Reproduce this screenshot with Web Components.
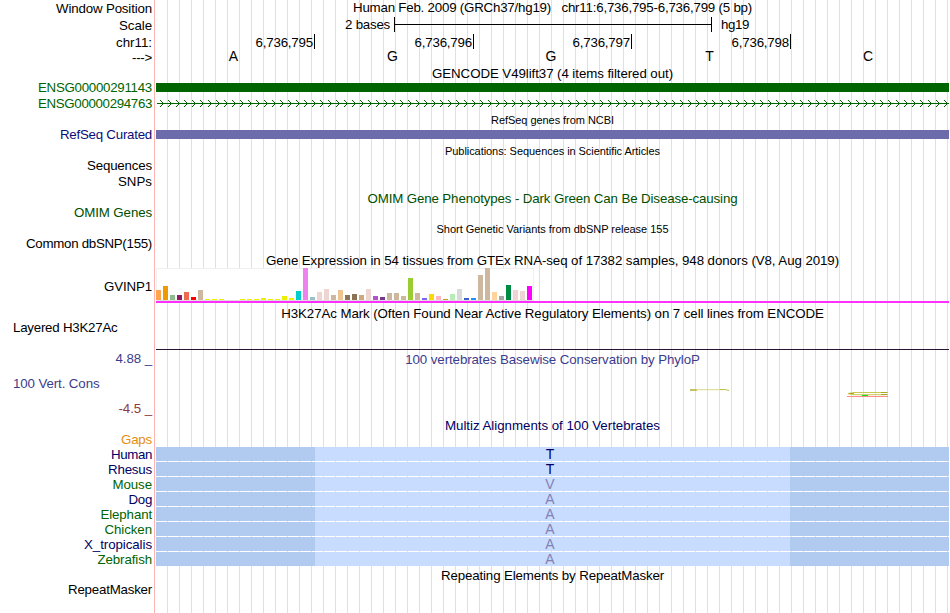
<!DOCTYPE html>
<html lang="en">
<head>
<meta charset="utf-8">
<title>Genome Browser - Human Feb. 2009 (GRCh37/hg19)</title>
<style>
  body {
    margin: 0;
    background: #fff;
    color: #000;
    font: 13.3px/15px "Liberation Sans", Arial, sans-serif;
  }
</style>
</head>
<body>
<genome-browser>
  <track-row label="Window Position" lw="96" h="17" high title="Human Feb. 2009 (GRCh37/hg19)&nbsp;&nbsp; chr11:6,736,795-6,736,799 (5 bp)" tw="399"></track-row>
  <track-row label="Scale" lw="33" h="17"><scale-bar></scale-bar></track-row>
  <track-row label="chr11:" lw="36" h="15"><base-columns ticks values="6,736,795|6,736,796|6,736,797|6,736,798|"></base-columns></track-row>
  <track-row label="--->" lw="20" h="17"><base-columns values="A|G|G|T|C"></base-columns></track-row>
  <track-row h="13" high title="GENCODE V49lift37 (4 items filtered out)" tw="241"></track-row>
  <track-row label="ENSG00000291143" lw="114" h="16" color="#006400"><solid-bar color="#006400"></solid-bar></track-row>
  <track-row label="ENSG00000294763" lw="114" h="16" color="#006400"><intron-line></intron-line></track-row>
  <track-row h="15" title="RefSeq genes from NCBI" small tw="123"></track-row>
  <track-row label="RefSeq Curated" lw="92" h="16" color="#0c0c78"><solid-bar color="#6c6cac"></solid-bar></track-row>
  <track-row h="15" title="Publications: Sequences in Scientific Articles" small tw="215"></track-row>
  <track-row label="Sequences" lw="65" h="16"></track-row>
  <track-row label="SNPs" lw="34" h="17"></track-row>
  <track-row h="14" title="OMIM Gene Phenotypes - Dark Green Can Be Disease-causing" tw="370" color="#005000"></track-row>
  <track-row label="OMIM Genes" lw="78" h="16" color="#005000"></track-row>
  <track-row h="15" title="Short Genetic Variants from dbSNP release 155" small tw="232"></track-row>
  <track-row label="Common dbSNP(155)" lw="126" h="17"></track-row>
  <track-row h="16" title="Gene Expression in 54 tissues from GTEx RNA-seq of 17382 samples, 948 donors (V8, Aug 2019)" tw="573"></track-row>
  <track-row label="GVINP1" lw="48" h="37" drop="10"><gtex-chart></gtex-chart></track-row>
  <track-row h="14" title="H3K27Ac Mark (Often Found Near Active Regulatory Elements) on 7 cell lines from ENCODE" tw="542.5"></track-row>
  <track-row label="Layered H3K27Ac" lw="104.5" h="31" left><baseline-rule></baseline-rule></track-row>
  <track-row label="4.88 _" lw="36.5" h="25" low color="#3c3c8c" title="100 vertebrates Basewise Conservation by PhyloP" tw="294.5"></track-row>
  <track-row label="100 Vert. Cons" lw="86.5" h="25" color="#3c3c8c" left><phylop-logo></phylop-logo></track-row>
  <track-row label="-4.5 _" lw="33.5" h="17" color="#8c3c3c"></track-row>
  <track-row h="14" title="Multiz Alignments of 100 Vertebrates" tw="215" color="#000064"></track-row>
  <track-row label="Gaps" lw="31" h="16" color="#e68c14"></track-row>
  <track-row label="Human" lw="41" h="15" flush color="#000064"><align-band base="T"></align-band></track-row>
  <track-row label="Rhesus" lw="44" h="15" flush color="#000064"><align-band base="T"></align-band></track-row>
  <track-row label="Mouse" lw="39.5" h="15" flush color="#006400"><align-band base="V" weak></align-band></track-row>
  <track-row label="Dog" lw="23.5" h="15" flush color="#000064"><align-band base="A" weak></align-band></track-row>
  <track-row label="Elephant" lw="51.5" h="15" flush color="#006400"><align-band base="A" weak></align-band></track-row>
  <track-row label="Chicken" lw="47.5" h="15" flush color="#006400"><align-band base="A" weak></align-band></track-row>
  <track-row label="X_tropicalis" lw="68" h="15" flush color="#000064"><align-band base="A" weak></align-band></track-row>
  <track-row label="Zebrafish" lw="54.5" h="15" flush color="#006400"><align-band base="A" weak></align-band></track-row>
  <track-row h="14" title="Repeating Elements by RepeatMasker" tw="223"></track-row>
  <track-row label="RepeatMasker" lw="84" h="32"></track-row>
</genome-browser>

<script>
const attach = (el, html) => {
  el.attachShadow({ mode: "open" }).innerHTML = html;
};

// text run spread to a given width, spacing out the letters
class FitText extends HTMLElement {
  connectedCallback() {
    attach(this, `
      <style>
        :host { display: inline-block; white-space: nowrap; text-align: left; }
        span { display: inline-block; }
      </style>
      <span><slot></slot></span>`);
    const width = Number(this.getAttribute("w"));
    if (!width) return;
    const span = this.shadowRoot.querySelector("span");
    const natural = span.getBoundingClientRect().width;
    const gap = (width - natural) / this.textContent.length;
    span.style.letterSpacing = `${gap}px`;
    this.style.width = `${width}px`;
  }
}

class GenomeBrowser extends HTMLElement {
  connectedCallback() {
    attach(this, `
      <style>
        :host {
          display: flex;
          flex-direction: column;
          box-sizing: border-box;
          width: 949px;
          height: 613px;
          overflow: hidden;
          background:
            linear-gradient(#ffb4b4, #ffb4b4) 154px 0 / 1px 100% no-repeat,
            repeating-linear-gradient(90deg, transparent 0 11px, #dcdcff 11px 12px) 156px 0 / 793px 100% no-repeat;
        }
      </style>
      <slot></slot>`);
  }
}

class TrackRow extends HTMLElement {
  connectedCallback() {
    const get = (name) => this.getAttribute(name) || "";
    const title = get("title");
    this.removeAttribute("title");
    const pad = this.hasAttribute("flush") ? 0 : 1 + Number(get("drop"));
    attach(this, `
      <style>
        :host {
          display: grid;
          grid-template-columns: 152px 793px;
          column-gap: 4px;
          flex: none;
          height: ${get("h")}px;
          color: ${get("color") || "#000"};
        }
        .label {
          padding-top: ${pad}px;
          text-align: right;
          white-space: nowrap;
        }
        :host([left]) .label {
          padding-left: 13px;
          text-align: left;
        }
        .title {
          height: 15px;
          padding-top: 1px;
          text-align: center;
        }
        :host([high]) .title { padding-top: 0; }
        :host([low]) .title { padding-top: 2px; }
        :host([small]) .title { font-size: 11px; padding-top: 2px; }
      </style>
      <div class="label">${get("label") ? `<fit-text w="${get("lw")}">${get("label")}</fit-text>` : ""}</div>
      <div class="track">
        ${title ? `<div class="title"><fit-text w="${get("tw")}">${title}</fit-text></div>` : ""}
        <slot></slot>
      </div>`);
  }
}

class ScaleBar extends HTMLElement {
  connectedCallback() {
    attach(this, `
      <style>
        :host { display: flex; padding-left: 189px; height: 16px; }
        .rule {
          box-sizing: border-box;
          width: 318px;
          height: 15px;
          margin: 0 9px 0 4px;
          border: solid #000;
          border-width: 0 1px;
          background: linear-gradient(#000, #000) 0 7px / 100% 1px no-repeat;
        }
      </style>
      <fit-text w="45">2 bases</fit-text>
      <div class="rule"></div>
      <fit-text w="28">hg19</fit-text>`);
  }
}

class BaseColumns extends HTMLElement {
  connectedCallback() {
    const ticks = this.hasAttribute("ticks");
    const cells = this.getAttribute("values").split("|").map((value) =>
      `<div>${ticks && value ? `<fit-text w="57.5">${value}</fit-text>` : value}</div>`);
    attach(this, `
      <style>
        :host {
          display: grid;
          grid-template-columns: 159px 159px 158px 159px 158px;
          text-align: center;
        }
        div { box-sizing: border-box; padding-right: 4px; }
        :host(:not([ticks])) { font-size: 14px; }
        :host([ticks]) div {
          height: 15px;
          padding: 1px 2px 0 0;
          text-align: right;
          background: linear-gradient(#000, #000) right 0 / 1px 100% no-repeat;
        }
        :host([ticks]) div:last-child { background: none; }
      </style>
      ${cells.join("")}`);
  }
}

class SolidBar extends HTMLElement {
  connectedCallback() {
    attach(this, `
      <style>
        :host { display: block; padding-top: 4px; }
        div { height: 9px; background: ${this.getAttribute("color")}; }
      </style>
      <div></div>`);
  }
}

// intron with strand arrows every 8px
class IntronLine extends HTMLElement {
  connectedCallback() {
    attach(this, `
      <style>
        :host { display: block; padding-top: 5px; }
        svg { display: block; }
      </style>
      <svg width="793" height="7" shape-rendering="crispEdges" fill="#006400">
        <defs>
          <pattern id="arrow" x="1" width="8" height="7" patternUnits="userSpaceOnUse">
            <path d="M3 0h1v1h-1zM4 1h1v1h-1zM5 2h1v1h-1zM5 4h1v1h-1zM4 5h1v1h-1zM3 6h1v1h-1z"/>
          </pattern>
        </defs>
        <rect x="1" y="3" width="792" height="1"/>
        <rect x="1" width="792" height="7" fill="url(#arrow)"/>
      </svg>`);
  }
}

// one [height, colour] pair for each tissue
const tissues = [
  [10, "#ffa54f"], [14, "#ee9a00"], [5, "#8fbc8f"], [5, "#8b1c62"], [8, "#ee6a50"], [3, "#ff0000"],
  [10, "#cdb79e"], [1, "#eeee00"], [1, "#eeee00"], [1, "#eeee00"], [0, "#eeee00"], [0, "#eeee00"],
  [1, "#eeee00"], [1, "#eeee00"], [1, "#eeee00"], [2, "#eeee00"], [1, "#eeee00"], [1, "#eeee00"],
  [4, "#eeee00"], [2, "#eeee00"], [9, "#00cdcd"], [32, "#ee82ee"], [3, "#9ac0cd"], [8, "#eed5d2"],
  [11, "#eed5d2"], [5, "#cdb79e"], [10, "#eec591"], [5, "#8b7355"], [6, "#8b7355"], [5, "#cdaa7d"],
  [11, "#eed5d2"], [4, "#b452cd"], [3, "#7a378b"], [7, "#cdb79e"], [7, "#cdb79e"], [4, "#cdb79e"],
  [22, "#9acd32"], [7, "#cdb79e"], [2, "#7a67ee"], [6, "#ffd700"], [4, "#ffb6c1"], [1, "#cd9b1d"],
  [6, "#b4eeb4"], [11, "#d9d9d9"], [2, "#3a5fcd"], [2, "#1e90ff"], [25, "#cdb79e"], [32, "#cdb79e"],
  [8, "#ffd39b"], [4, "#a6a6a6"], [15, "#008b45"], [10, "#eed5d2"], [9, "#eed5d2"], [14, "#ff00ff"],
];

class GtexChart extends HTMLElement {
  connectedCallback() {
    attach(this, `
      <style>
        :host { display: block; }
        .bars {
          display: flex;
          align-items: flex-end;
          gap: 2px;
          box-sizing: border-box;
          width: 378px;
          height: 33px;
          background: linear-gradient(#e0e0e0, #e0e0e0) 0 32px / 100% 1px no-repeat, #fff;
          box-shadow: inset 1px 1px #f0f0f0, inset -1px 0 #f0f0f0;
          padding-bottom: 1px;
        }
        .bars i { width: 5px; }
        .gene { height: 2px; background: #ff30ff; }
      </style>
      <div class="bars">${tissues.map(([h, c]) => `<i style="height:${h}px;background:${c}"></i>`).join("")}</div>
      <div class="gene"></div>`);
  }
}

class BaselineRule extends HTMLElement {
  connectedCallback() {
    attach(this, `
      <style>
        :host { display: block; padding-top: 30px; }
        div { height: 1px; background: #281432; }
      </style>
      <div></div>`);
  }
}

// squashed sequence logo letters over the last two bases
class PhylopLogo extends HTMLElement {
  connectedCallback() {
    attach(this, `
      <style>
        :host { display: block; }
        svg { display: block; }
      </style>
      <svg width="793" height="25" fill="none">
        <path d="M534 15h7" stroke="#b4b43c" stroke-width="1.6"/>
        <path d="M540 14.7h28" stroke="#d8d88c"/>
        <path d="M564 14.5h5l4 1" stroke="#c0c04c"/>
        <path d="M692 18.5l6 -1h34M692 18.7l6 1h34" stroke="#c8c850"/>
        <path d="M693 18.5h5M725 17.5h6M725 19.5h6" stroke="#a8a828"/>
        <path d="M706 20.5h6" stroke="#14dc14"/>
        <path d="M691 21.5h41" stroke="#ff8c8c"/>
      </svg>`);
  }
}

class AlignBand extends HTMLElement {
  connectedCallback() {
    attach(this, `
      <style>
        :host {
          display: grid;
          grid-template: 14px / 159px 475px 159px;
          color: #000064;
          font-size: 14px;
        }
        :host([weak]) { color: #8282b4; }
        div { background: #b0caf0; }
        .mid { background: #c8dcff; padding-right: 5px; text-align: center; }
      </style>
      <div></div><div class="mid">${this.getAttribute("base")}</div><div></div>`);
  }
}

customElements.define("fit-text", FitText);
customElements.define("genome-browser", GenomeBrowser);
customElements.define("track-row", TrackRow);
customElements.define("scale-bar", ScaleBar);
customElements.define("base-columns", BaseColumns);
customElements.define("solid-bar", SolidBar);
customElements.define("intron-line", IntronLine);
customElements.define("gtex-chart", GtexChart);
customElements.define("baseline-rule", BaselineRule);
customElements.define("phylop-logo", PhylopLogo);
customElements.define("align-band", AlignBand);
</script>
</body>
</html>
